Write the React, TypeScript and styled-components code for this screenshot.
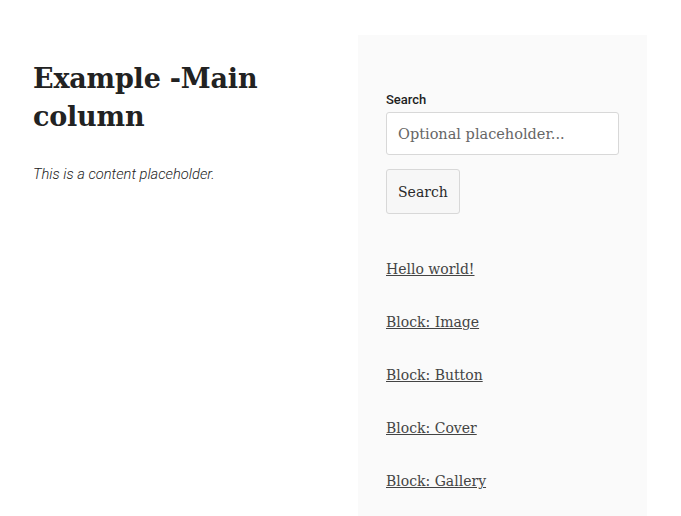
import React from "react";
import styled, { createGlobalStyle } from "styled-components";

const Global = createGlobalStyle`
  html, body { margin: 0; padding: 0; background: #fff; }
  body { overflow: hidden; }
`;

const Page = styled.div`
  display: flex;
  align-items: flex-start;
  padding: 35px 0 0 33px;
  height: 516px;
  box-sizing: border-box;
`;

const Main = styled.main`
  width: 325px;
  padding-top: 25px;
`;

const Title = styled.h1`
  margin: 0;
  font-family: "DejaVu Serif", serif;
  font-weight: 700;
  font-size: 27px;
  line-height: 38px;
  color: #222;
  letter-spacing: -0.2px;
`;

const Lead = styled.p`
  margin: 28px 0 0;
  font-family: Roboto, sans-serif;
  font-style: italic;
  font-weight: 300;
  font-size: 14.7px;
  line-height: 20px;
  color: #222;
`;

const Sidebar = styled.aside`
  width: 289px;
  height: 481px;
  background: #fafafa;
  padding: 56px 28px 0;
  box-sizing: border-box;
  display: flex;
  flex-direction: column;
`;

const Label = styled.label`
  font-family: Roboto, sans-serif;
  font-weight: 500;
  font-size: 13px;
  line-height: 18px;
  color: #1e1e1e;
`;

const Input = styled.input`
  margin-top: 3px;
  width: 233px;
  height: 43px;
  box-sizing: border-box;
  border: 1px solid #d8d8d8;
  border-radius: 3px;
  background: #fff;
  padding: 0 11px;
  font-family: "DejaVu Serif", serif;
  font-size: 14.5px;
  color: #333;
  &::placeholder { color: #666; }
`;

const Button = styled.button`
  margin-top: 14px;
  align-self: flex-start;
  height: 45px;
  padding: 0 11px;
  box-sizing: border-box;
  border: 1px solid #d8d8d8;
  border-radius: 3px;
  background: #f7f7f7;
  font-family: "DejaVu Serif", serif;
  font-size: 14px;
  color: #2a2a2a;
`;

const Links = styled.ul`
  list-style: none;
  margin: 44px 0 0;
  padding: 0;
  display: flex;
  flex-direction: column;
  gap: 31px;
`;

const Link = styled.a`
  font-family: "DejaVu Serif", serif;
  font-size: 14px;
  line-height: 22px;
  color: #444;
  text-decoration: underline;
`;

const posts = ["Hello world!", "Block: Image", "Block: Button", "Block: Cover", "Block: Gallery"];

export default function App() {
  return (
    <>
      <Global />
      <Page>
        <Main>
          <Title>Example -Main column</Title>
          <Lead>This is a content placeholder.</Lead>
        </Main>
        <Sidebar>
          <Label htmlFor="s">Search</Label>
          <Input id="s" placeholder="Optional placeholder..." />
          <Button>Search</Button>
          <Links>
            {posts.map((p) => (
              <li key={p}>
                <Link href="#">{p}</Link>
              </li>
            ))}
          </Links>
        </Sidebar>
      </Page>
    </>
  );
}
